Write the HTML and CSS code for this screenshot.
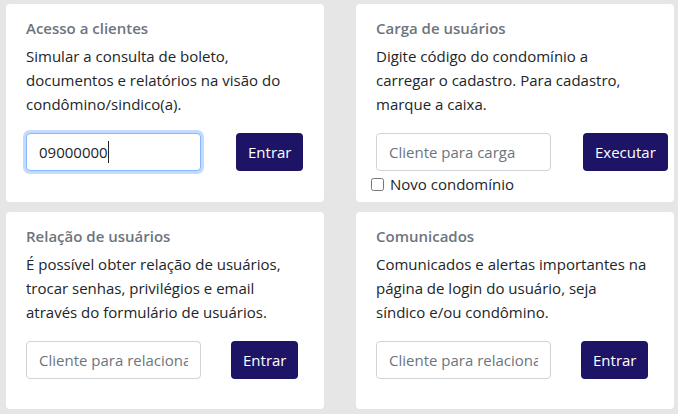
FILE: index.html
```html
<!DOCTYPE html>
<html lang="pt-BR">
<head>
<meta charset="utf-8">
<title>Painel</title>
<link rel="stylesheet" href="styles.css">
</head>
<body>
<main class="grid">
  <section class="card">
    <h6 class="card-title">Acesso a clientes</h6>
    <p class="card-text">Simular a consulta de boleto, documentos e relatórios na visão do condômino/sindico(a).</p>
    <div class="form-row gap-35">
      <span class="field-wrap">
        <input class="field focused" type="text" value="09000000">
        <span class="caret"></span>
      </span>
      <button class="btn" type="button">Entrar</button>
    </div>
  </section>
  <section class="card">
    <h6 class="card-title">Carga de usuários</h6>
    <p class="card-text">Digite código do condomínio a carregar o cadastro. Para cadastro, marque a caixa.</p>
    <div class="form-row gap-32">
      <input class="field" type="text" placeholder="Cliente para carga">
      <button class="btn" type="button">Executar</button>
    </div>
    <label class="check"><input type="checkbox" class="check-box"><span>Novo condomínio</span></label>
  </section>
  <section class="card">
    <h6 class="card-title">Relação de usuários</h6>
    <p class="card-text">É possível obter relação de usuários, trocar senhas, privilégios e email através do formulário de usuários.</p>
    <div class="form-row gap-30">
      <input class="field" type="text" placeholder="Cliente para relacionar">
      <button class="btn" type="button">Entrar</button>
    </div>
  </section>
  <section class="card">
    <h6 class="card-title">Comunicados</h6>
    <p class="card-text">Comunicados e alertas importantes na página de login do usuário, seja síndico e/ou condômino.</p>
    <div class="form-row gap-30">
      <input class="field" type="text" placeholder="Cliente para relacionar">
      <button class="btn" type="button">Entrar</button>
    </div>
  </section>
</main>
</body>
</html>
```
FILE: styles.css
```css
* { box-sizing: border-box; }
html, body { margin: 0; }
body {
  background: #e6e6e6;
  font-family: "Open Sans", "Noto Sans", sans-serif;
  font-size: 15px;
  color: #212529;
  padding: 4px 4px 0 6px;
}
.grid {
  display: grid;
  grid-template-columns: 318px 318px;
  grid-template-rows: 198px 197px;
  column-gap: 32px;
  row-gap: 10px;
}
.card {
  background: #fff;
  border-radius: 4px;
  padding: 14px 20px 0 20px;
}
.card-title {
  margin: 0 0 6px 0;
  font-size: 15px;
  font-weight: 600;
  line-height: 20px;
  color: #6c757d;
}
.card-text {
  margin: 0;
  max-width: 271px;
  font-size: 15px;
  line-height: 24px;
}
.form-row {
  display: flex;
  align-items: center;
  margin-top: 17px;
}
.gap-35 { gap: 35px; }
.gap-32 { gap: 32px; }
.gap-30 { gap: 30px; }
.field-wrap {
  position: relative;
  display: block;
}
.field {
  display: block;
  width: 175px;
  height: 38px;
  border: 1px solid #ced4da;
  border-radius: 4px;
  padding: 6px 12px;
  font-family: inherit;
  font-size: 15px;
  color: #212529;
  outline: none;
}
.field::placeholder { color: #6c757d; }
.field.focused {
  border-color: #86b7fe;
  box-shadow: 0 0 0 3px rgba(13, 110, 253, 0.25);
}
.caret {
  position: absolute;
  left: 82px;
  top: 8px;
  width: 1px;
  height: 22px;
  background: #212529;
}
.btn {
  height: 38px;
  padding: 6px 12px;
  border: none;
  border-radius: 4px;
  background: #1e1466;
  color: #fff;
  font-family: inherit;
  font-size: 15px;
}
.check {
  display: flex;
  align-items: center;
  gap: 6px;
  margin-left: -5px;
  margin-top: 1px;
  font-size: 15px;
  line-height: 24px;
}
.check-box {
  width: 13px;
  height: 13px;
  margin: 0;
}
```
